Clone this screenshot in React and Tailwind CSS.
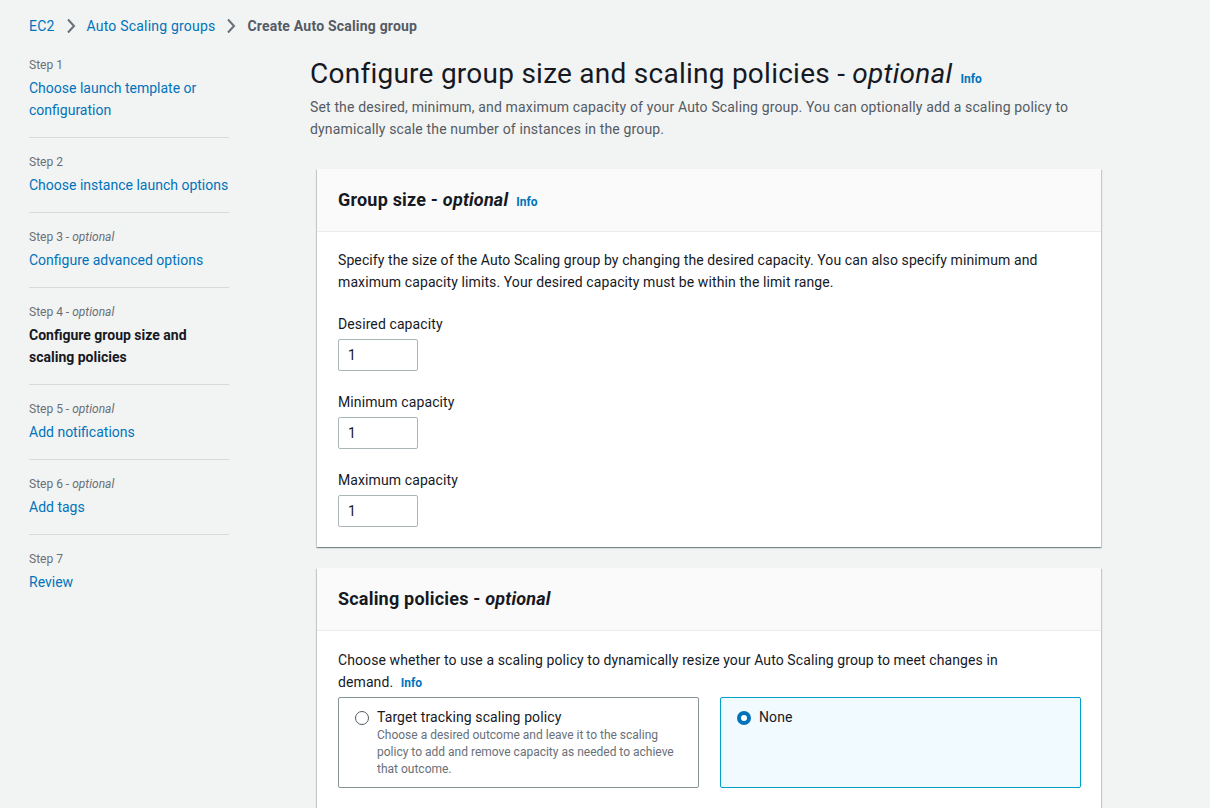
import React from 'react';

const steps = [
  { n: 1, title: 'Choose launch template or configuration' },
  { n: 2, title: 'Choose instance launch options' },
  { n: 3, optional: true, title: 'Configure advanced options' },
  { n: 4, optional: true, title: 'Configure group size and scaling policies', current: true },
  { n: 5, optional: true, title: 'Add notifications' },
  { n: 6, optional: true, title: 'Add tags' },
  { n: 7, title: 'Review' },
];

const cardShadow =
  'shadow-[0_1px_1px_0_rgba(0,28,36,0.3),1px_1px_1px_0_rgba(0,28,36,0.15),-1px_1px_1px_0_rgba(0,28,36,0.15)]';

const Chevron = () => (
  <svg width="10" height="16" viewBox="0 0 10 16" fill="none" className="text-[#687078]">
    <polyline points="2,1.5 8,8 2,14.5" stroke="currentColor" strokeWidth="2" strokeLinejoin="miter" />
  </svg>
);

const Info = ({ className = '' }) => (
  <span className={`text-xs font-bold tracking-normal text-[#0073bb] ${className}`}>Info</span>
);

const CapacityField = ({ label }) => (
  <div className="mt-5">
    <div className="text-sm leading-[22px] text-[#16191f]">{label}</div>
    <div className="mt-1 flex h-8 w-20 items-center rounded-[2px] border border-[#aab7b8] bg-white px-[9px] text-sm text-[#16191f]">
      1
    </div>
  </div>
);

const Radio = ({ checked }) =>
  checked ? (
    <span className="mt-[4px] box-border h-[14px] w-[14px] shrink-0 rounded-full border-[4px] border-[#0073bb] bg-white" />
  ) : (
    <span className="mt-[4px] box-border h-[14px] w-[14px] shrink-0 rounded-full border border-[#545b64] bg-white" />
  );

export default function App() {
  return (
    <div className="min-h-screen bg-[#f2f3f3] font-['Roboto',sans-serif] text-[#16191f]">
      {/* breadcrumb */}
      <div className="flex items-center gap-[11px] px-[29px] pt-[15px] text-sm leading-[22px] tracking-[0.2px]">
        <span className="text-[#0073bb]">EC2</span>
        <Chevron />
        <span className="text-[#0073bb]">Auto Scaling groups</span>
        <Chevron />
        <span className="font-bold text-[#545b64]">Create Auto Scaling group</span>
      </div>

      <div className="flex pl-[29px]">
        {/* steps sidebar */}
        <nav className="w-[200px] shrink-0 pt-[4px]">
          {steps.map((s, i) => (
            <div
              key={s.n}
              className={`pt-4 pb-4 ${i < steps.length - 1 ? 'border-b border-[#d5dbdb]' : ''}`}
            >
              <div className="text-xs leading-4 text-[#687078]">
                Step {s.n}
                {s.optional && (
                  <>
                    {' - '}
                    <i>optional</i>
                  </>
                )}
              </div>
              <div
                className={`mt-1 text-sm leading-[22px] ${
                  s.current ? 'font-bold text-[#16191f]' : 'text-[#0073bb]'
                }`}
              >
                {s.title}
              </div>
            </div>
          ))}
        </nav>

        {/* main */}
        <main className="ml-[81px] w-[791px] shrink-0">
          <div className="pt-[19px]">
            <h1 className="flex items-baseline text-[28px] leading-9 font-normal tracking-[0.25px] text-[#16191f]">
              <span>
                Configure group size and scaling policies - <i>optional</i>
              </span>
              <Info className="ml-2" />
            </h1>
            <p className="mt-1 text-sm leading-[22px] tracking-[0.15px] text-[#545b64]">
              Set the desired, minimum, and maximum capacity of your Auto Scaling group. You can optionally add a
              scaling policy to dynamically scale the number of instances in the group.
            </p>
          </div>

          <div className="ml-[7px] w-[784px]">
            {/* Group size card */}
            <section className={`mt-[29px] bg-white ${cardShadow}`}>
              <div className="flex h-[63px] items-center border-b border-[#eaeded] bg-[#fafafa] px-[21px]">
                <h2 className="text-lg font-bold leading-6 tracking-[0.2px]">
                  Group size - <i>optional</i>
                </h2>
                <Info className="ml-2 mt-[3px]" />
              </div>
              <div className="px-[21px] pr-5 pt-[17px] pb-5 tracking-[0.1px]">
                <p className="text-sm leading-[22px] text-[#16191f]">
                  Specify the size of the Auto Scaling group by changing the desired capacity. You can also specify
                  minimum and maximum capacity limits. Your desired capacity must be within the limit range.
                </p>
                <CapacityField label="Desired capacity" />
                <CapacityField label="Minimum capacity" />
                <CapacityField label="Maximum capacity" />
              </div>
            </section>

            {/* Scaling policies card */}
            <section className={`mt-[21px] bg-white ${cardShadow}`}>
              <div className="flex h-[63px] items-center border-b border-[#eaeded] bg-[#fafafa] px-[21px]">
                <h2 className="text-lg font-bold leading-6 tracking-[0.2px]">
                  Scaling policies - <i>optional</i>
                </h2>
              </div>
              <div className="px-[21px] pr-5 pt-[18px] pb-5 tracking-[0.1px]">
                <p className="text-sm leading-[22px] text-[#16191f]">
                  Choose whether to use a scaling policy to dynamically resize your Auto Scaling group to meet changes in{' '}
                  <span className="whitespace-nowrap">
                    demand. <Info className="ml-1" />
                  </span>
                </p>
                <div className="mt-1 grid grid-cols-2 gap-[21px]">
                  <div className="flex h-[91px] gap-2 rounded-[2px] border border-[#879596] bg-white pl-4 pr-3 pt-[9px]">
                    <Radio />
                    <div>
                      <div className="text-sm leading-5 text-[#16191f]">Target tracking scaling policy</div>
                      <div className="text-xs leading-[17px] tracking-normal text-[#687078]">
                        Choose a desired outcome and leave it to the scaling policy to add and remove capacity as
                        needed to achieve that outcome.
                      </div>
                    </div>
                  </div>
                  <div className="flex h-[91px] gap-2 rounded-[2px] border border-[#00a1c9] bg-[#f1faff] pl-4 pr-3 pt-[9px]">
                    <Radio checked />
                    <div className="text-sm leading-5 text-[#16191f]">None</div>
                  </div>
                </div>
              </div>
            </section>
          </div>
        </main>
      </div>
    </div>
  );
}
